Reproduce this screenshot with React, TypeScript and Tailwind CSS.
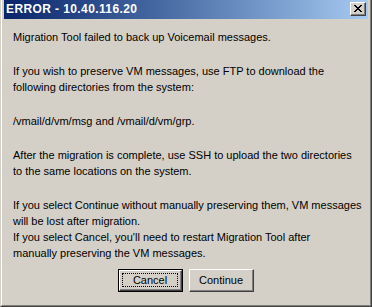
import React from "react";

const paragraphs: string[][] = [
  ["Migration Tool failed to back up Voicemail messages."],
  [
    "If you wish to preserve VM messages, use FTP to download the",
    "following directories from the system:",
  ],
  ["/vmail/d/vm/msg and /vmail/d/vm/grp."],
  [
    "After the migration is complete, use SSH to upload the two directories",
    "to the same locations on the system.",
  ],
  [
    "If you select Continue without manually preserving them, VM messages",
    "will be lost after migration.",
    "If you select Cancel, you'll need to restart Migration Tool after",
    "manually preserving the VM messages.",
  ],
];

function CloseButton() {
  return (
    <div className="w-[16px] h-[14px] border-t border-l border-white border-r border-b border-r-[#404040] border-b-[#404040] bg-[#d4d0c8]">
      <div className="w-full h-full border-r border-b border-[#808080] flex items-center justify-center">
        <svg width="8" height="7" viewBox="0 0 8 7" shapeRendering="crispEdges">
          <path
            d="M0 0h2v1h-2zM6 0h2v1h-2zM1 1h2v1h-2zM5 1h2v1h-2zM2 2h4v1h-4zM3 3h2v1h-2zM2 4h4v1h-4zM1 5h2v1h-2zM5 5h2v1h-2zM0 6h2v1h-2zM6 6h2v1h-2z"
            fill="#000"
          />
        </svg>
      </div>
    </div>
  );
}

function DialogButton({ label, isDefault }: { label: string; isDefault?: boolean }) {
  if (isDefault) {
    return (
      <div className="w-[65px] h-[23px] border border-black">
        <div className="w-full h-full border-t border-l border-white border-r border-b border-r-[#404040] border-b-[#404040]">
          <div className="w-full h-full border-r border-b border-[#808080] p-[2px]">
            <div className="w-full h-full border border-dotted border-black flex items-center justify-center">
              {label}
            </div>
          </div>
        </div>
      </div>
    );
  }
  return (
    <div className="w-[65px] h-[23px] border-t border-l border-white border-r border-b border-r-[#404040] border-b-[#404040]">
      <div className="w-full h-full border-r border-b border-[#808080] flex items-center justify-center">
        {label}
      </div>
    </div>
  );
}

export default function App() {
  return (
    <div
      className="w-[372px] h-[307px] bg-[#d4d0c8] border-l border-l-[#d4d0c8] border-r border-b border-r-[#404040] border-b-[#404040] text-[11px] text-black"
      style={{ fontFamily: '"Liberation Sans", Arial, sans-serif' }}
    >
      <div className="h-full border-l border-l-white border-r border-b border-r-[#808080] border-b-[#808080] pl-[2px] pr-[2px] flex flex-col">
        {/* Title bar */}
        <div className="h-[19px] bg-gradient-to-r from-[#0a246a] to-[#a6caf0] flex items-center justify-between pl-[2px] pr-[2px] pb-[1px]">
          <span className="text-white font-bold text-[12px] tracking-[0.4px] leading-none">ERROR - 10.40.116.20</span>
          <CloseButton />
        </div>

        {/* Body */}
        <div className="flex-1 flex flex-col pl-[9px] pt-[10px] leading-[16px]">
          {paragraphs.map((lines, i) => (
            <div key={i} className={i === 0 ? "" : "mt-[18px]"}>
              {lines.map((l, j) => (
                <div key={j} className="whitespace-nowrap">
                  {l}
                </div>
              ))}
            </div>
          ))}

          <div className="mt-[8px] flex justify-center gap-[6px] pr-[9px]">
            <DialogButton label="Cancel" isDefault />
            <DialogButton label="Continue" />
          </div>
        </div>
      </div>
    </div>
  );
}
